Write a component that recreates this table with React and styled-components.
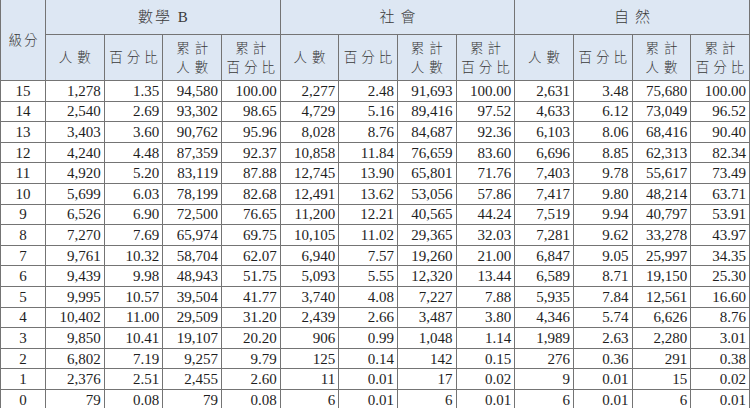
import React from "react";
import styled, { createGlobalStyle } from "styled-components";

//* Data
const subjects = ["數學 B", "社會", "自然"];

const rows = [
  [15, "1,278", "1.35", "94,580", "100.00", "2,277", "2.48", "91,693", "100.00", "2,631", "3.48", "75,680", "100.00"],
  [14, "2,540", "2.69", "93,302", "98.65", "4,729", "5.16", "89,416", "97.52", "4,633", "6.12", "73,049", "96.52"],
  [13, "3,403", "3.60", "90,762", "95.96", "8,028", "8.76", "84,687", "92.36", "6,103", "8.06", "68,416", "90.40"],
  [12, "4,240", "4.48", "87,359", "92.37", "10,858", "11.84", "76,659", "83.60", "6,696", "8.85", "62,313", "82.34"],
  [11, "4,920", "5.20", "83,119", "87.88", "12,745", "13.90", "65,801", "71.76", "7,403", "9.78", "55,617", "73.49"],
  [10, "5,699", "6.03", "78,199", "82.68", "12,491", "13.62", "53,056", "57.86", "7,417", "9.80", "48,214", "63.71"],
  [9, "6,526", "6.90", "72,500", "76.65", "11,200", "12.21", "40,565", "44.24", "7,519", "9.94", "40,797", "53.91"],
  [8, "7,270", "7.69", "65,974", "69.75", "10,105", "11.02", "29,365", "32.03", "7,281", "9.62", "33,278", "43.97"],
  [7, "9,761", "10.32", "58,704", "62.07", "6,940", "7.57", "19,260", "21.00", "6,847", "9.05", "25,997", "34.35"],
  [6, "9,439", "9.98", "48,943", "51.75", "5,093", "5.55", "12,320", "13.44", "6,589", "8.71", "19,150", "25.30"],
  [5, "9,995", "10.57", "39,504", "41.77", "3,740", "4.08", "7,227", "7.88", "5,935", "7.84", "12,561", "16.60"],
  [4, "10,402", "11.00", "29,509", "31.20", "2,439", "2.66", "3,487", "3.80", "4,346", "5.74", "6,626", "8.76"],
  [3, "9,850", "10.41", "19,107", "20.20", "906", "0.99", "1,048", "1.14", "1,989", "2.63", "2,280", "3.01"],
  [2, "6,802", "7.19", "9,257", "9.79", "125", "0.14", "142", "0.15", "276", "0.36", "291", "0.38"],
  [1, "2,376", "2.51", "2,455", "2.60", "11", "0.01", "17", "0.02", "9", "0.01", "15", "0.02"],
  [0, "79", "0.08", "79", "0.08", "6", "0.01", "6", "0.01", "6", "0.01", "6", "0.01"],
];

//* Style
const GlobalStyle = createGlobalStyle`
  body {
    margin: 0;
    background: #ffffff;
    overflow: hidden;
  }
`;

const Sheet = styled.div`
  width: 750px;
  height: 408px;
  overflow: hidden;
`;

const Table = styled.table`
  border-collapse: collapse;
  table-layout: fixed;
  width: 750px;
  margin-top: -1px;
  font-family: "Liberation Serif", "Noto Sans CJK TC", serif;
  color: #1e1e1e;

  td,
  th {
    border: 1px solid #747474;
    padding: 0;
  }
`;

const Head = styled.th`
  background: #dde7f3;
  font-weight: 300;
  color: #3a3a3a;
  font-family: "Liberation Serif", "Noto Sans CJK TC", serif;
  font-size: ${({ $big }) => ($big ? "15px" : "13.5px")};
  letter-spacing: ${({ $sp }) => $sp || "4px"};
  padding-left: ${({ $sp }) => $sp || "4px"} !important;
  line-height: 19px;
  text-align: center;
  vertical-align: middle;
  height: ${({ $h }) => $h || "auto"};
`;

const Row = styled.tr`
  height: 20.6px;
`;

const Level = styled.td`
  text-align: center;
  font-size: 15px;
  line-height: 18px;
`;

const Num = styled.td`
  text-align: right;
  padding-right: 3px !important;
  font-size: 15px;
  line-height: 18px;
`;

//* JSX
function App() {
  return (
    <Sheet>
      <GlobalStyle />
      <Table>
        <colgroup>
          <col style={{ width: "45px" }} />
          {Array.from({ length: 12 }).map((_, i) => (
            <col key={i} />
          ))}
        </colgroup>
        <thead>
          <tr>
            <Head rowSpan={2} $sp="2px">級分</Head>
            {subjects.map((s) => (
              <Head
                key={s}
                colSpan={4}
                $h="34px"
                $big
                $sp={s.includes("B") ? "2px" : "6px"}
              >
                {s}
              </Head>
            ))}
          </tr>
          <tr>
            {subjects.map((s) => (
              <React.Fragment key={s}>
                <Head $h="45px" $sp="5px">人數</Head>
                <Head $sp="4px">百分比</Head>
                <Head $sp="5px">
                  累計
                  <br />
                  人數
                </Head>
                <Head $sp="4px">
                  累計
                  <br />
                  百分比
                </Head>
              </React.Fragment>
            ))}
          </tr>
        </thead>
        <tbody>
          {rows.map(([level, ...cells]) => (
            <Row key={level}>
              <Level>{level}</Level>
              {cells.map((c, i) => (
                <Num key={i}>{c}</Num>
              ))}
            </Row>
          ))}
        </tbody>
      </Table>
    </Sheet>
  );
}

export default App;
